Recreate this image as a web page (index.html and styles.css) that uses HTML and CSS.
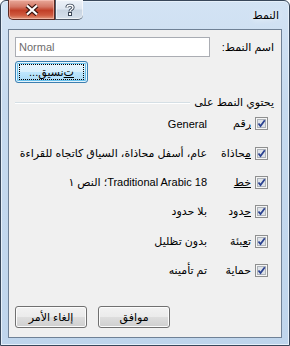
FILE: index.html
```html
<!DOCTYPE html>
<html lang="ar" dir="rtl">
<head>
<meta charset="utf-8">
<link rel="stylesheet" href="styles.css">
</head>
<body>
<div class="window">
  <div class="titlebar">
    <span class="title">النمط</span>
    <div class="caption">
      <div class="cap-help">
        <svg width="10" height="13" viewBox="0 0 10 13"><path d="M2 4.5 C2 1.5 8 1.5 8 4.5 C8 6.5 5 6.5 5 8.5" fill="none" stroke="#3a4656" stroke-width="3.2"/><path d="M2 4.5 C2 1.5 8 1.5 8 4.5 C8 6.5 5 6.5 5 8.5" fill="none" stroke="#fff" stroke-width="1.4"/><rect x="3.5" y="9.5" width="3" height="3" fill="#fff" stroke="#3a4656"/></svg>
      </div>
      <div class="cap-close">
        <svg width="14" height="12" viewBox="0 0 14 12"><path d="M2 1.5 L12 10.5 M12 1.5 L2 10.5" stroke="#3a1510" stroke-width="4.4"/><path d="M2 1.5 L12 10.5 M12 1.5 L2 10.5" stroke="#fff" stroke-width="2.2"/></svg>
      </div>
    </div>
  </div>
  <div class="client">
    <div class="name-row">
      <span class="label">اسم النمط:</span>
      <div class="input" dir="ltr">Normal</div>
    </div>
    <div class="format-row">
      <button class="btn btn-focus"><span class="focus-ring"><u>ت</u>نسيق...</span></button>
    </div>
    <div class="group-head">
      <span>يحتوي النمط على</span>
      <div class="line"></div>
    </div>
    <div class="items">
      <div class="item">
        <span class="cb"><svg width="13" height="13" viewBox="0 0 13 13"><rect x="0.5" y="0.5" width="12" height="12" fill="#f5f5f5" stroke="#8e8f8f"/><rect x="2.5" y="2.5" width="8" height="8" fill="#dfe3e8" stroke="#aeb3b9"/><path d="M3.5 6.5 L5.5 9 L9.8 3.3" fill="none" stroke="#2b4291" stroke-width="1.8"/></svg></span>
        <span class="lbl"><u>ر</u>قم</span>
        <span class="val">General</span>
      </div>
      <div class="item">
        <span class="cb"><svg width="13" height="13" viewBox="0 0 13 13"><rect x="0.5" y="0.5" width="12" height="12" fill="#f5f5f5" stroke="#8e8f8f"/><rect x="2.5" y="2.5" width="8" height="8" fill="#dfe3e8" stroke="#aeb3b9"/><path d="M3.5 6.5 L5.5 9 L9.8 3.3" fill="none" stroke="#2b4291" stroke-width="1.8"/></svg></span>
        <span class="lbl"><u>م</u>حاذاة</span>
        <span class="val">عام، أسفل محاذاة، السياق كاتجاه للقراءة</span>
      </div>
      <div class="item">
        <span class="cb"><svg width="13" height="13" viewBox="0 0 13 13"><rect x="0.5" y="0.5" width="12" height="12" fill="#f5f5f5" stroke="#8e8f8f"/><rect x="2.5" y="2.5" width="8" height="8" fill="#dfe3e8" stroke="#aeb3b9"/><path d="M3.5 6.5 L5.5 9 L9.8 3.3" fill="none" stroke="#2b4291" stroke-width="1.8"/></svg></span>
        <span class="lbl"><u>خط</u></span>
        <span class="val">Traditional Arabic 18؛ النص ١</span>
      </div>
      <div class="item">
        <span class="cb"><svg width="13" height="13" viewBox="0 0 13 13"><rect x="0.5" y="0.5" width="12" height="12" fill="#f5f5f5" stroke="#8e8f8f"/><rect x="2.5" y="2.5" width="8" height="8" fill="#dfe3e8" stroke="#aeb3b9"/><path d="M3.5 6.5 L5.5 9 L9.8 3.3" fill="none" stroke="#2b4291" stroke-width="1.8"/></svg></span>
        <span class="lbl"><u>ح</u>دود</span>
        <span class="val">بلا حدود</span>
      </div>
      <div class="item">
        <span class="cb"><svg width="13" height="13" viewBox="0 0 13 13"><rect x="0.5" y="0.5" width="12" height="12" fill="#f5f5f5" stroke="#8e8f8f"/><rect x="2.5" y="2.5" width="8" height="8" fill="#dfe3e8" stroke="#aeb3b9"/><path d="M3.5 6.5 L5.5 9 L9.8 3.3" fill="none" stroke="#2b4291" stroke-width="1.8"/></svg></span>
        <span class="lbl">ت<u>ع</u>بئة</span>
        <span class="val">بدون تظليل</span>
      </div>
      <div class="item">
        <span class="cb"><svg width="13" height="13" viewBox="0 0 13 13"><rect x="0.5" y="0.5" width="12" height="12" fill="#f5f5f5" stroke="#8e8f8f"/><rect x="2.5" y="2.5" width="8" height="8" fill="#dfe3e8" stroke="#aeb3b9"/><path d="M3.5 6.5 L5.5 9 L9.8 3.3" fill="none" stroke="#2b4291" stroke-width="1.8"/></svg></span>
        <span class="lbl">حماية</span>
        <span class="val">تم تأمينه</span>
      </div>
    </div>
    <div class="footer">
      <button class="btn">موافق</button>
      <button class="btn"><u>إ</u>لغاء الأمر</button>
    </div>
  </div>
</div>
</body>
</html>
```

FILE: styles.css
```css
* { box-sizing: border-box; }
html, body { margin: 0; padding: 0; }
body {
  width: 290px;
  height: 346px;
  background: #fff;
  font-family: "Liberation Sans", "DejaVu Sans", sans-serif;
  font-size: 11px;
  color: #000;
}
u { text-decoration: underline; }
.window {
  width: 290px;
  height: 346px;
  border: 1px solid #38475a;
  border-radius: 6px 6px 0 0;
  background: linear-gradient(to bottom, #d3e3f4 0%, #c6daef 30%, #bfd5ec 100%);
  box-shadow: inset 0 0 0 1px #e6f0fa;
  display: flex;
  flex-direction: column;
  padding: 0 7px 7px 7px;
}
.titlebar {
  height: 28px;
  display: flex;
  flex-direction: row;
  align-items: flex-start;
}
.title {
  margin-top: 8px;
  margin-right: 3px;
  font-size: 11px;
  color: #000;
  text-shadow: 0 0 6px #ffffff;
}
.caption {
  margin-right: auto;
  display: flex;
  flex-direction: row;
  margin-top: -1px;
}
.cap-close, .cap-help {
  height: 20px;
  display: flex;
  align-items: center;
  justify-content: center;
  border: 1px solid #4f5b6a;
  border-top: none;
}
.cap-close {
  width: 47px;
  border-radius: 0 0 0 5px;
  border-color: #5a2a22;
  background: linear-gradient(to bottom, #e9a99a 0%, #d47967 35%, #c13f27 55%, #cf5a3f 80%, #e29a7e 100%);
  box-shadow: inset 0 0 0 1px rgba(255,210,200,0.5);
}
.cap-help {
  width: 28px;
  border-right: none;
  border-radius: 0 0 5px 0;
  background: linear-gradient(to bottom, #edf2f8 0%, #dfe7f0 45%, #c9d5e2 55%, #d6e1ec 100%);
  box-shadow: inset 0 0 0 1px rgba(255,255,255,0.6);
}
.client {
  flex: 1;
  border: 1px solid #6f8196;
  background: #f0f0f0;
  padding: 7px 6px 9px 6px;
  display: flex;
  flex-direction: column;
}
.name-row {
  display: flex;
  flex-direction: row;
  align-items: center;
  height: 20px;
}
.label {
  width: 58px;
  margin-left: 7px;
  padding-right: 1px;
}
.input {
  width: 195px;
  height: 20px;
  border: 1px solid #abadb3;
  border-top-color: #a8acb3;
  background: #fff;
  color: #6d6d6d;
  text-align: left;
  padding: 2px 3px;
  line-height: 14px;
}
.format-row {
  margin-top: 4px;
  display: flex;
  flex-direction: row;
  justify-content: flex-end;
}
.btn {
  width: 73px;
  height: 22px;
  border: 1px solid #707070;
  border-radius: 3px;
  background: linear-gradient(to bottom, #f2f2f2 0%, #ebebeb 48%, #dddddd 52%, #cfcfcf 100%);
  box-shadow: inset 0 0 0 1px #fcfcfc;
  font-family: "Liberation Sans", "DejaVu Sans", sans-serif;
  font-size: 11px;
  color: #000;
  padding: 0;
  display: flex;
  align-items: center;
  justify-content: center;
}
.btn-focus {
  border-color: #3c7fb1;
  background: linear-gradient(to bottom, #eaf6fd 0%, #d9f0fc 48%, #bee6fd 52%, #a7d9f5 100%);
  box-shadow: inset 0 0 0 1px #e5f4fc, inset 0 0 0 2px #6cc2ec;
}
.focus-ring {
  border: 1px dotted #000;
  width: 65px;
  height: 16px;
  display: flex;
  align-items: center;
  justify-content: center;
  line-height: 14px;
}
.group-head {
  margin-top: 13px;
  display: flex;
  flex-direction: row;
  align-items: center;
  height: 13px;
}
.group-head span {
  padding-right: 1px;
  margin-left: 4px;
}
.group-head .line {
  flex: 1;
  height: 2px;
  border-top: 1px solid #d5dfe5;
  border-bottom: 1px solid #ffffff;
}
.items {
  margin-top: 0;
  padding-right: 7px;
  display: flex;
  flex-direction: column;
}
.item {
  height: 29.4px;
  display: flex;
  flex-direction: row;
  align-items: center;
}
.cb {
  width: 13px;
  height: 13px;
  display: flex;
  margin-left: 4px;
}
.lbl {
  width: 39px;
  white-space: nowrap;
}
.val {
  margin-right: 5px;
  white-space: nowrap;
}
.footer {
  margin-top: auto;
  display: flex;
  flex-direction: row;
  justify-content: flex-end;
  gap: 11px;
}
.footer .btn { width: 72px; }
```
